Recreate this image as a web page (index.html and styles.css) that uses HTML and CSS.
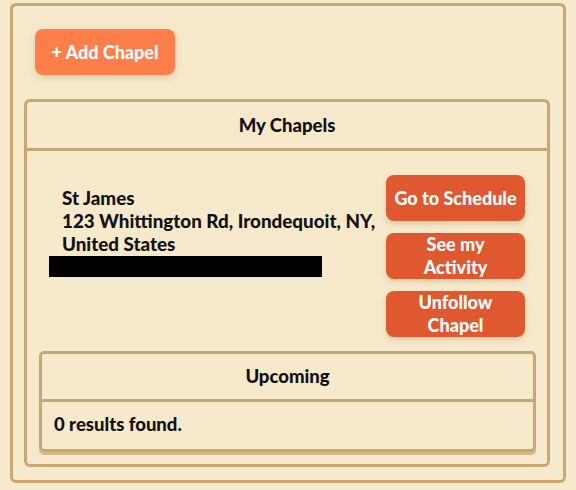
FILE: index.html
```html
<!DOCTYPE html>
<html lang="en">
<head>
  <meta charset="UTF-8">
  <meta name="viewport" content="width=device-width, initial-scale=1.0">
  <title>My Chapels</title>
  <link rel="stylesheet" href="styles.css">
</head>
<body>
  <div class="page">
    <!-- Add Chapel -->
    <button class="add-chapel">+ Add Chapel</button>

    <!-- My Chapels card -->
    <div class="card">
      <div class="card-header">My Chapels</div>
      <div class="card-body">
        <div class="chapel-row">
          <div class="chapel-info">
            <p class="chapel-address">
              St James<br>
              123 Whittington Rd, Irondequoit, NY,<br>
              United States
            </p>
            <div class="redacted"></div>
          </div>
          <div class="chapel-actions">
            <button class="action-btn">Go to Schedule</button>
            <button class="action-btn">See my<br>Activity</button>
            <button class="action-btn">Unfollow<br>Chapel</button>
          </div>
        </div>

        <!-- Upcoming events -->
        <div class="card upcoming">
          <div class="card-header">Upcoming</div>
          <div class="upcoming-body">0 results found.</div>
        </div>
      </div>
    </div>
  </div>
</body>
</html>
```

FILE: styles.css
```css
body {
  font-family: Lato, "Open Sans", sans-serif;
  font-weight: 900;
  margin: 0;
  padding: 3px 10px 7px;
  background-color: #f7eacc;
  color: #111;
}

.page {
  border: 3px solid #c8a870;
  border-radius: 6px;
  padding: 23px 13px 13px 11px;
}

button {
  font-family: inherit;
  font-weight: 900;
  border: none;
  color: white;
  cursor: pointer;
}

.add-chapel {
  display: block;
  margin-left: 11px;
  width: 140px;
  height: 46px;
  background-color: #fd7e4a;
  border-radius: 8px;
  font-size: 18px;
  box-shadow: 0 3px 8px rgba(120, 80, 30, 0.2);
}

.card {
  margin-top: 24px;
  border: 3px solid #c8a870;
  border-radius: 6px;
}

.card-header {
  height: 46px;
  line-height: 46px;
  text-align: center;
  font-size: 18.5px;
  border-bottom: 3px solid #c8a870;
}

.card-body {
  padding: 24px 11px 12px 12px;
}

.chapel-row {
  display: flex;
  justify-content: space-between;
  padding: 0 11px 0 10px;
}

.chapel-info {
  margin-top: 11px;
}

.chapel-address {
  margin: 0 0 0 13px;
  font-size: 18.8px;
  line-height: 23px;
}

.redacted {
  width: 273px;
  height: 21px;
  margin-top: 1px;
  background-color: #000;
}

.chapel-actions {
  display: flex;
  flex-direction: column;
  gap: 12px;
  width: 139px;
}

.action-btn {
  height: 46px;
  background-color: #e0582f;
  border-radius: 8px;
  font-size: 18px;
  line-height: 23px;
  padding: 0 4px;
  box-shadow: 0 3px 6px rgba(120, 80, 30, 0.2);
}

.upcoming {
  margin-top: 14px;
  border-radius: 5px;
  box-shadow: 0 3px 0 #d3b987;
}

.upcoming .card-header {
  height: 45px;
  line-height: 45px;
}

.upcoming-body {
  padding: 0 12px;
  height: 47px;
  line-height: 45px;
  font-size: 18.5px;
}
```
